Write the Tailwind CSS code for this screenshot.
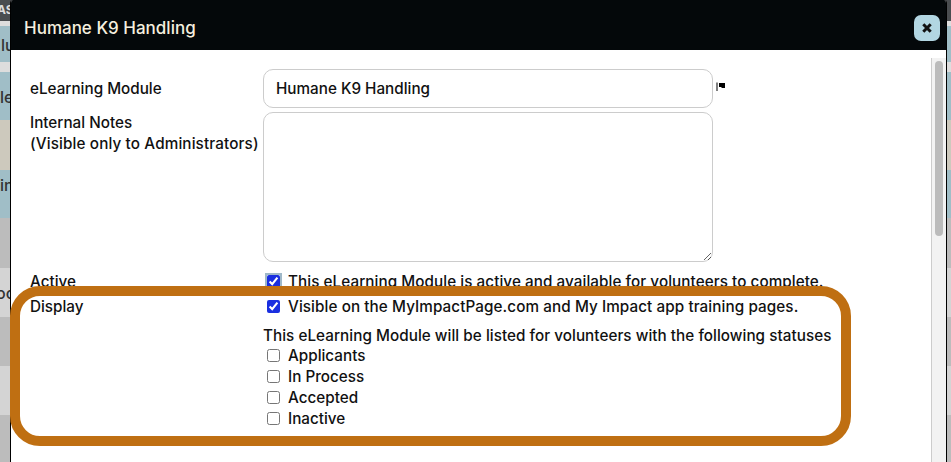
<!doctype html>
<html><head><meta charset="utf-8"><script src="https://cdn.jsdelivr.net/npm/@tailwindcss/browser@4"></script></head>
<body class="relative h-[462px] w-[951px] overflow-hidden bg-[#bbb] font-['Inter',sans-serif] text-[15.25px] font-medium text-[#111]">
<div class="flex h-[462px] flex-col overflow-hidden text-[16px] leading-[24px] text-[#333]">
  <div class="h-[21px] bg-[#4a4d50] text-[12px] font-bold leading-[20px] text-[#ddd]"><span class="-ml-[3px] block">AS</span></div>
  <div class="h-[5px] bg-[#ddd]"></div>
  <div class="h-[36px] bg-[#a0bec7] pl-[1px] pt-[7px]">lu</div>
  <div class="h-[10px] bg-[#ddd]"></div>
  <div class="h-[48px] bg-[#a0bec7] pt-[13px]">le</div>
  <div class="h-[50px] bg-[#cdc9bd]"></div>
  <div class="h-[48px] bg-[#a0bec7] pt-[3px]">in</div>
  <div class="h-[50px] bg-[#bcbcbc]"></div>
  <div class="h-[49px] bg-[#d4d4d4] pt-[13px] whitespace-nowrap"><span class="-ml-[4px] block">oo</span></div>
  <div class="h-[49px] bg-[#bcbcbc]"></div>
  <div class="h-[49px] bg-[#d4d4d4]"></div>
  <div class="flex-1 bg-[#bcbcbc]"></div>
</div>
<div class="absolute left-[10px] top-0 flex h-[462px] w-[937px] flex-col overflow-hidden rounded-t-[3px] border-x border-black bg-white">
  <div class="flex h-[50px] shrink-0 items-center justify-between bg-[#04080a] pl-[13px] pr-[6px] pt-[6px]">
    <span class="pt-[1px] text-[17px] text-[#f5efdf]">Humane K9 Handling</span>
    <button class="flex h-[26px] w-[26px] items-center justify-center rounded-[7px] bg-[#b2d6e2]"><svg width="10" height="10" viewBox="0 0 10 10"><path d="M1.3 1.3L8.7 8.7M8.7 1.3L1.3 8.7" stroke="#111" stroke-width="3"/></svg></button>
  </div>
  <div class="flex min-h-0 flex-1">
    <div class="flex-1 pl-[19px] pt-[19px]">
      <div class="flex"><div class="w-[233px] pt-[9px]">eLearning Module</div><input value="Humane K9 Handling" class="h-[39px] w-[450px] rounded-[10px] border border-[#ccc] pl-[12px]"><svg class="ml-[3px] mt-[13px]" width="10" height="10" viewBox="0 0 10 10"><path d="M1 0.5V9" stroke="#000"/><path d="M3 1H9V6H6L5 5H3Z" fill="#000"/></svg></div>
      <div class="mt-[4px] flex"><div class="w-[233px] leading-[21px]">Internal Notes<br><span class="whitespace-nowrap tracking-[0.13px]">(Visible only to Administrators)</span></div><textarea class="block h-[150px] w-[450px] rounded-[10px] border border-[#ccc]"></textarea></div>
      <div class="mt-[9px] flex"><div class="w-[233px]">Active</div><label class="flex items-center gap-[8px] tracking-[0.06px]"><input type="checkbox" checked class="-mt-[2px] ml-[4px] h-[13px] w-[13px] accent-[#1a2fe0] outline-2 outline-[#9fb8c8]">This eLearning Module is active and available for volunteers to complete.</label></div>
      <div class="mt-[2px] flex"><div class="w-[233px]">Display</div><div>
        <label class="flex items-center gap-[8px] tracking-[0.08px]"><input type="checkbox" checked class="-mt-[2px] ml-[4px] h-[13px] w-[13px] accent-[#1a2fe0]">Visible on the MyImpactPage.com and My Impact app training pages.</label>
        <div class="mt-[6px] h-[21px] tracking-[0.04px]">This eLearning Module will be listed for volunteers with the following statuses</div>
        <label class="flex h-[21px] items-center gap-[8px]"><input type="checkbox" class="-mt-[2px] ml-[4px] h-[13px] w-[13px]">Applicants</label>
        <label class="flex h-[21px] items-center gap-[8px]"><input type="checkbox" class="-mt-[2px] ml-[4px] h-[13px] w-[13px]">In Process</label>
        <label class="flex h-[21px] items-center gap-[8px]"><input type="checkbox" class="-mt-[2px] ml-[4px] h-[13px] w-[13px]">Accepted</label>
        <label class="flex h-[21px] items-center gap-[8px]"><input type="checkbox" class="-mt-[2px] ml-[4px] h-[13px] w-[13px]">Inactive</label>
      </div></div>
    </div>
    <div class="mt-[8px] w-[15px] shrink-0 border-l border-[#ccc] bg-[#f2f2f2] pl-[3px] pt-[3px]"><div class="h-[175px] w-[8px] rounded-full bg-[#bbb]"></div></div>
  </div>
</div>
<div class="absolute left-[10px] top-[286px] h-[160px] w-[841px] rounded-[30px] border-[10px] border-[#bf6f12]"></div>
</body></html>
